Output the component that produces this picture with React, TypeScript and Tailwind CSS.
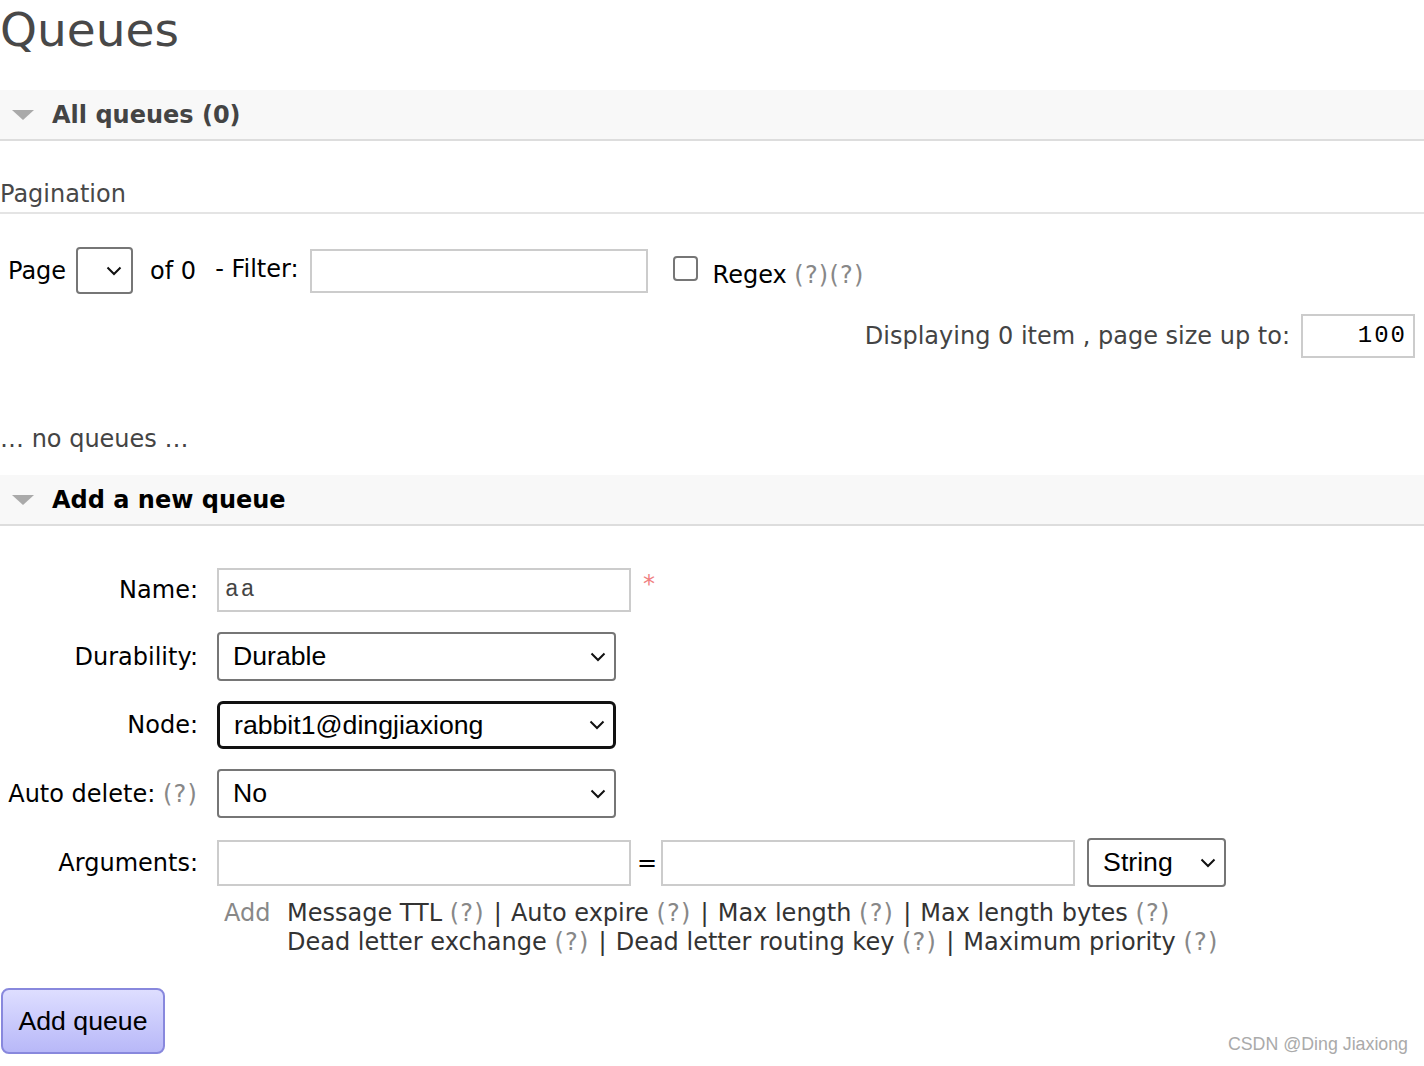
import React from "react";

const verdana = { fontFamily: '"DejaVu Sans", Verdana, sans-serif' };

const Triangle = () => (
  <svg width="24" height="12" viewBox="0 0 24 12" className="shrink-0">
    <path d="M1 1 L23 1 L12 11 Z" fill="#aaaaaa" />
  </svg>
);

const Chevron = ({ w = 16 }: { w?: number }) => (
  <svg width={w} height={w / 2 + 2} viewBox="0 0 16 10" className="shrink-0">
    <path d="M1.5 1.5 L8 8 L14.5 1.5" fill="none" stroke="#111" strokeWidth="2" />
  </svg>
);

// Verdana's parens and pipe run wider than DejaVu's, so pad them a little
const Help = () => <span className="tracking-[1.2px] text-[#888]">(?)</span>;
const Sep = () => <span className="px-[1.4px]">|</span>;

const FakeSelect = ({
  value,
  className,
}: {
  value: string;
  className: string;
}) => (
  <div
    className={`flex items-center justify-between bg-white pl-[14px] pr-[8px] font-['Liberation_Sans',Arial,sans-serif] text-[26.67px] text-black ${className}`}
  >
    <span className="leading-none">{value}</span>
    <Chevron />
  </div>
);

const SectionBar = ({ title, dark }: { title: string; dark?: boolean }) => (
  <div className="flex h-[51px] items-center gap-[17px] border-b-2 border-[#dddddd] bg-[#f8f8f8] pl-[11px]">
    <Triangle />
    <h2 className={`text-[24px] font-bold ${dark ? "text-black" : "text-[#444]"}`}>{title}</h2>
  </div>
);

const FormRow = ({
  label,
  children,
  className = "",
}: {
  label: React.ReactNode;
  children: React.ReactNode;
  className?: string;
}) => (
  <div className={`flex items-center ${className}`}>
    <div className="w-[198px] shrink-0 text-right text-black">{label}</div>
    <div className="ml-[19px] flex items-center">{children}</div>
  </div>
);

export default function App() {
  return (
    <div className="relative min-h-[1066px] w-[1424px] bg-white text-[24px] text-[#444]" style={verdana}>
      {/* Header */}
      <h1 className="h-[90px] pt-[2px] text-[47px] leading-[56px] font-normal text-[#484848]">Queues</h1>

      <SectionBar title="All queues (0)" />

      {/* Pagination */}
      <div className="mt-[38px] border-b-2 border-[#e4e4e4] pb-[3px]">
        <h3 className="text-[24px] leading-[30px] text-[#484848]">Pagination</h3>
      </div>

      <div className="mt-[33px] flex items-center pl-[8px] text-black">
        <span>Page</span>
        <div className="ml-[10px] flex h-[47px] w-[57px] items-center justify-end rounded-[4px] border-2 border-[#767676] pr-[9px]">
          <Chevron />
        </div>
        <span className="ml-[17px]">of 0</span>
        <span className="ml-[19px] -mt-[4px]">- Filter:</span>
        <div className="ml-[11px] h-[44px] w-[338px] border-2 border-[#cccccc]" />
        <div className="ml-[25px] -mt-[4px] h-[25px] w-[25px] rounded-[4px] border-2 border-[#767676]" />
        <span className="ml-[15px] mt-[8px]">
          Regex <Help />
          <Help />
        </span>
      </div>

      <div className="mt-[20px] flex items-center justify-end pr-[9px]">
        <span className="text-[#444]">Displaying 0 item , page size up to:</span>
        <div className="ml-[11px] flex h-[44px] w-[114px] items-center justify-end border-2 border-[#cccccc] pr-[6px] font-['Liberation_Mono',monospace] text-[24px] tracking-[2px] text-black">
          100
        </div>
      </div>

      <p className="mt-[63px] h-[35px] text-[#444]">… no queues …</p>

      <div className="mt-[19px]">
        <SectionBar title="Add a new queue" dark />
      </div>

      {/* Form */}
      <div className="mt-[42px] flex flex-col">
        <FormRow label="Name:">
          <div className="flex h-[44px] w-[414px] items-center border-2 border-[#cccccc] pl-[6px] font-['Liberation_Mono',monospace] text-[23px] tracking-[2px] text-[#444]">
            aa
          </div>
          <span className="ml-[12px] -mt-[12px] text-[#f08080]">*</span>
        </FormRow>

        <FormRow label="Durability:" className="mt-[20px]">
          <FakeSelect value="Durable" className="h-[49px] w-[399px] rounded-[4px] border-2 border-[#767676]" />
        </FormRow>

        <FormRow label="Node:" className="mt-[20px]">
          <FakeSelect
            value="rabbit1@dingjiaxiong"
            className="h-[48px] w-[399px] rounded-[6px] border-[3px] border-[#111]"
          />
        </FormRow>

        <FormRow
          label={
            <>
              Auto delete: <Help />
            </>
          }
          className="mt-[20px]"
        >
          <FakeSelect value="No" className="h-[49px] w-[399px] rounded-[4px] border-2 border-[#767676]" />
        </FormRow>

        <FormRow label="Arguments:" className="mt-[20px]">
          <div className="h-[46px] w-[414px] border-2 border-[#cccccc]" />
          <span className="ml-[6px] mr-[4px] text-black">=</span>
          <div className="h-[46px] w-[414px] border-2 border-[#cccccc]" />
          <FakeSelect
            value="String"
            className="ml-[12px] h-[49px] w-[139px] rounded-[4px] border-2 border-[#767676]"
          />
        </FormRow>

        <div className="mt-[12px] flex pl-[224px] leading-[29px]">
          <span className="w-[63px] shrink-0 text-[#888]">Add</span>
          <div className="text-[#333]">
            <div>
              Message TTL <Help /> <Sep /> Auto expire <Help /> <Sep /> Max length <Help /> <Sep /> Max length
              bytes <Help />
            </div>
            <div>
              Dead letter exchange <Help /> <Sep /> Dead letter routing key <Help /> <Sep /> Maximum priority{" "}
              <Help />
            </div>
          </div>
        </div>
      </div>

      <button className="mt-[31px] ml-[1px] h-[66px] w-[164px] rounded-[8px] border-2 border-[#8888dd] bg-gradient-to-b from-[#dedeff] to-[#b8b8f8] font-['Liberation_Sans',Arial,sans-serif] text-[26.67px] text-black">
        Add queue
      </button>

      <div className="absolute bottom-[8px] right-[16px] font-['Liberation_Sans',Arial,sans-serif] text-[17.8px] text-[#aaaaaa]">
        CSDN @Ding Jiaxiong
      </div>
    </div>
  );
}
